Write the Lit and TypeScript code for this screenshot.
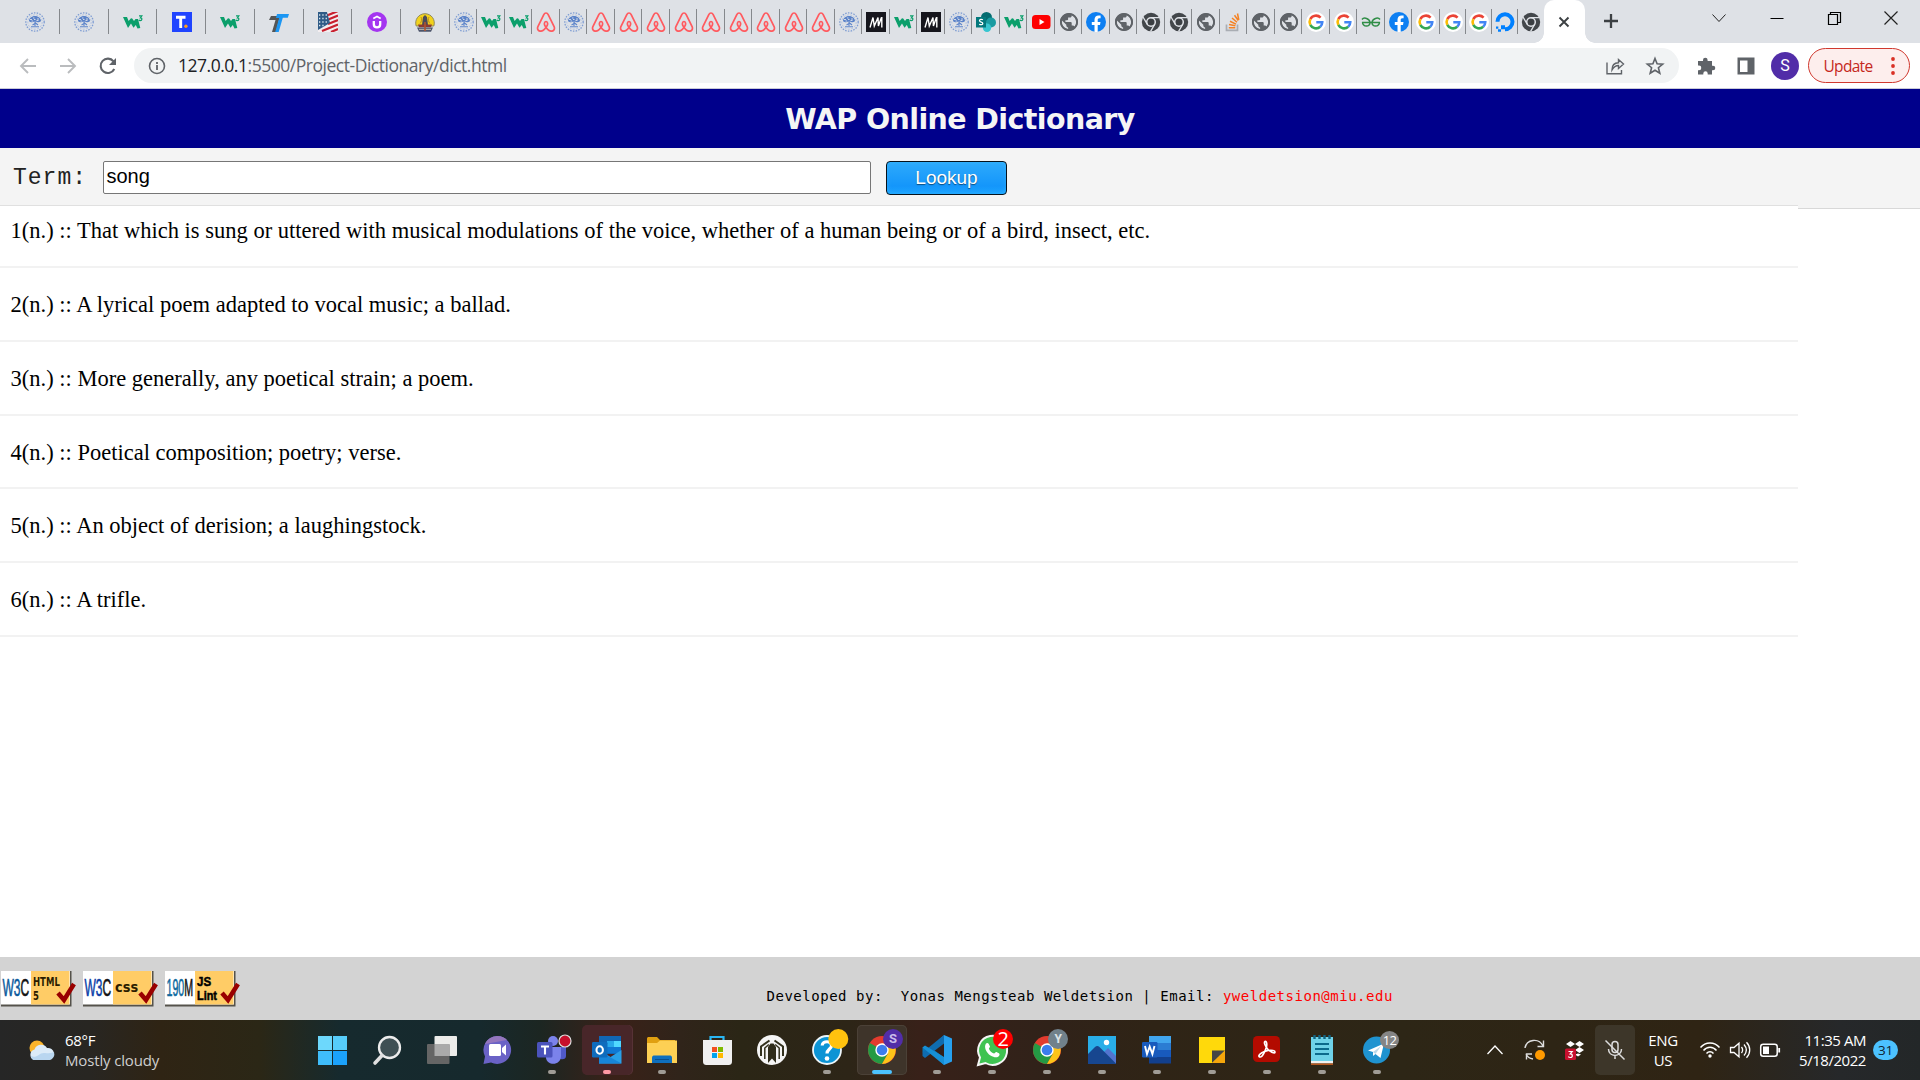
import { LitElement, html, svg, css } from "lit";
import { customElement } from "lit/decorators.js";

const glyph = (size: number, body: unknown, box = size) =>
  html`<svg width=${size} height=${size} viewBox="0 0 ${box} ${box}" fill="none">${body}</svg>`;

/* ---------- favicons, all on a 20 x 20 grid ---------- */
const googleG = svg`<circle cx="10" cy="10" r="10" fill="#fff"/>
  <path d="M14.6 5.6A6.4 6.4 0 0 0 4.3 7.1" stroke="#ea4335" stroke-width="2.6"/>
  <path d="M4.3 7.1a6.4 6.4 0 0 0 0 5.8" stroke="#fbbc05" stroke-width="2.6"/>
  <path d="M4.3 12.9a6.4 6.4 0 0 0 9.9 1.9" stroke="#34a853" stroke-width="2.6"/>
  <path d="M14.2 14.8a6.2 6.2 0 0 0 2.1-4.5h-6" stroke="#4285f4" stroke-width="2.5"/>`;

const favicons: Record<string, unknown> = {
  seal: svg`<circle cx="10" cy="10" r="9.200" stroke="#7f9dd3" stroke-width="1.300" stroke-dasharray="1.500 1.300"/>
    <circle cx="10" cy="10" r="7.200" stroke="#a9bce0" stroke-width=".8" stroke-dasharray="2 1.500"/>
    <path d="M4 9c0-2.500 2.500-5 6-5s6 2.500 6 5c-1 1.500-2 1-3 1.200s-2-.7-3-.700-2 .9-3 .700-2 .3-3-1.200z" fill="#5b83c9"/>
    <path d="M10 9v5M6 14.800h8M10 10.500l3 2.500M10 11.500 7.500 13" stroke="#5f86cb" stroke-width="1.100"/>
    <path d="M5 7.500h2M8 6h1.500M12 7h2M6.500 9H8M11.500 8.500h2M9 7.500h1.500" stroke="#dde1e9" stroke-width=".9"/>`,
  w3: svg`<path d="M0 5h4l1.600 4L8 6.200l1.200.3L11 9l1.500-2H15l2.300 9-2.800.5L12.800 13 10.500 15.800 8 11.500 5 16z" fill="#0b9f6b"/>
    <path d="M16 3.800h2.900l-1.500 2c2 0 2 2.800-.2 2.800-.8 0-1.200-.3-1.500-.7" stroke="#0b9f6b" stroke-width="1.200"/>`,
  tdot: svg`<path d="M0 0h20v20H0z" fill="#2044ff"/><path d="M4 5.200h9.500M8.700 5v11" stroke="#fff" stroke-width="2.900"/><circle cx="13.900" cy="14.300" r="1.700" fill="#ff9d1c"/>`,
  tt: svg`<path d="M2 4h9l-4 16H3L6.500 8H0z" fill="#555"/><path d="M8 2h12l-1.200 3.800h-5L9.700 20H6.200l4-14H7z" fill="#1b96f3"/>`,
  flag: svg`<path d="M0 0h20v20H0z" fill="#f4eef0"/>
    <path d="M9 3.500 20-1M9 8l11-4.500M10 12l10-4M4 19l16-6.500M13 20l7-3" stroke="#c8202f" stroke-width="2.200"/>
    <path d="M0 0h9l3 11-12 7z" fill="#2f5b87"/>
    <path d="M1 3h10M1 6.500h10M1 10h10M1 13.500h6" stroke="#dce8f0" stroke-width="1.300" stroke-dasharray="1.300 2"/>`,
  udemy: svg`<circle cx="10" cy="10" r="10" fill="#a435f0"/><path d="M6.800 9v3.200c0 4.300 6.400 4.300 6.400 0V9" stroke="#fff" stroke-width="2.300"/><path d="M6.300 6.600 10 4.400l3.700 2.200" stroke="#fff" stroke-width="1.700"/>`,
  emblem: svg`<path d="M1.200 14A9.300 9.300 0 1 1 18.800 14z" fill="#f2d21c" stroke="#8f8a5c" stroke-width="1"/>
    <path d="M7 13 8 5l2-2 2 2 1 8z" fill="#4b4a58"/><path d="M6 5c1.300 2 .5 5-1 6.500M14 5c-1.300 2-.5 5 1 6.500" stroke="#b9892b" stroke-width="1"/>
    <path d="M3 12.500h14l-1 2.700H4z" fill="#8b3a30"/><path d="M2 15.500h16l-2 4.300H4z" fill="#4d556b"/><path d="M4 17.300h12" stroke="#c9c2b4" stroke-width="1"/><path d="M10 10v9" stroke="#b0562f" stroke-width="1.600"/>`,
  airbnb: svg`<path d="M10 1c1 0 1.700.6 2.200 1.600l5.900 12c1 2.200-.3 4.600-2.600 4.600-2.600 0-5.500-3.200-6.600-5.500-1-2-.4-4.200 1.100-4.200s2.100 2.200 1.100 4.200c-1.100 2.300-4 5.500-6.600 5.500-2.300 0-3.600-2.400-2.600-4.600l5.900-12C8.300 1.600 9 1 10 1z" stroke="#ff5a5f" stroke-width="1.700"/>`,
  medium: svg`<path d="M0 0h20v20H0z" fill="#16161d"/><path d="M4 15.500 7 5.500l1.300 8.500 3.700-8.500.4 8.500 3-8.500M15.800 5v10.500" stroke="#fff" stroke-width="1.400"/>`,
  sharepoint: svg`<circle cx="10.500" cy="5.500" r="5.500" fill="#036c70"/><circle cx="15" cy="10.500" r="5" fill="#1a9ba1"/><circle cx="11" cy="15.800" r="4.200" fill="#37c6d0"/>
    <path d="M0 5h10v10.500H0z" fill="#03787c"/><path d="M6.900 7.800C5.500 7 3.500 7.300 3.500 8.600c0 1.900 3.300 1 3.300 2.800 0 1.500-2.200 1.600-3.600.8" stroke="#fff" stroke-width="1.300"/>`,
  youtube: svg`<rect x="1" y="3" width="18.500" height="14" rx="3.500" fill="#fe0000"/><path d="m8.500 7 5 3-5 3z" fill="#fff"/>`,
  globe: svg`<g transform="translate(-.8 -.8) scale(.9)"><path d="M12 2C6.480 2 2 6.480 2 12s4.480 10 10 10 10-4.480 10-10S17.520 2 12 2zm-1 17.930c-3.950-.490-7-3.850-7-7.930 0-.620.080-1.210.210-1.790L9 15v1c0 1.100.900 2 2 2v1.930zm6.900-2.540c-.260-.810-1-1.390-1.900-1.390h-1v-3c0-.550-.450-1-1-1H8v-2h2c.550 0 1-.450 1-1V7h2c1.100 0 2-.900 2-2v-.410c2.930 1.190 5 4.060 5 7.410 0 2.080-.800 3.970-2.100 5.390z" fill="#5f6368"/><circle cx="12" cy="12" r="9" stroke="#5f6368" stroke-width="2"/></g>`,
  facebook: svg`<circle cx="10" cy="10" r="10" fill="#0d7ff2"/><path d="M8.500 20v-7H5.800v-3h2.700V7.700c0-2.800 1.700-4.300 4.100-4.300l2 .2v2.600h-1.300c-1.300 0-1.600.8-1.600 1.600V10h2.800l-.5 3h-2.300v7z" fill="#fff"/>`,
  chrome: svg`<circle cx="10" cy="10" r="9.200" fill="#43474b"/><circle cx="10" cy="10" r="4.300" stroke="#dfe2e7" stroke-width="1.500"/><circle cx="10" cy="10" r="2.900" fill="#3b3f43"/>
    <path d="M10 5.600h8.500M6.200 12.200 2 5M13.800 12.200 9.600 19.400" stroke="#dfe2e7" stroke-width="1.300"/>`,
  overflow: svg`<path d="M2.500 12.500v5.800h11v-5.800" stroke="#a9adb3" stroke-width="1.700"/>
    <path d="M4.800 15.800h6.500M5 12.500l6.400 1.300M6 9.300l6 2.800M8 6l5 4.200M10.500 3.200 14.300 8.500M13.500 1.500l1.300 6.500" stroke="#f48225" stroke-width="1.500"/>`,
  google: googleG,
  gfg: svg`<path d="M1 7.500c2-2.800 7.500-1 8 2.800M1 10.500h18M9 10.500c0 5-7 4.500-7.500 0M19 7.500c-2-2.800-7.500-1-8 2.800M11 10.500c0 5 7 4.500 7.500 0" stroke="#2f8d46" stroke-width="1.500"/>`,
  ocean: svg`<path d="M10 17.300A7.500 7.500 0 1 0 2.500 9.700" stroke="#0080ff" stroke-width="4"/><path d="M6 13.300h4v4H6zM3 17.300h3v2.500H3zM1 14.500h2.300v2.300H1z" fill="#0080ff"/>`,
};

const wideTabs = ["seal", "seal", "w3", "tdot", "w3", "tt", "flag", "udemy", "emblem"];
const slimTabs = [
  "seal", "w3", "w3", "airbnb", "seal",
  ...Array<string>(9).fill("airbnb"),
  "seal", "medium", "w3", "medium", "seal", "sharepoint", "w3", "youtube", "globe", "facebook", "globe",
  "chrome", "chrome", "globe", "overflow", "globe", "globe", "google", "google", "gfg", "facebook", "google",
];
const lastTabs = ["google", "google", "ocean", "chrome"];

/* ---------- taskbar icons, all on a 32 x 32 grid ---------- */
const chromeColor = svg`<circle cx="16" cy="16" r="14" fill="#e33b2e"/>
  <path d="M16 16 3.900 9A14 14 0 0 0 16 30l6-10.400z" fill="#249a44"/>
  <path d="M16 16 22 19.500 16 30A14 14 0 0 0 28.100 9.500H16z" fill="#fdc419"/>
  <circle cx="16" cy="16" r="6.700" fill="#fff"/><circle cx="16" cy="16" r="5.300" fill="#3b7ded"/>`;

interface App { icon: unknown; run?: boolean; tone?: string; badge?: string; badgeTone?: string; }

const apps: App[] = [
  { icon: svg`<path d="M2 2h14v14H2z" fill="#6dd8fc"/><path d="M17 2h14v14H17z" fill="#56cdfb"/><path d="M2 17h14v14H2z" fill="#3fbdfb"/><path d="M17 17h14v14H17z" fill="#1ba2fb"/>` },
  { icon: svg`<circle cx="18.500" cy="13.500" r="10.500" fill="#3f5054" stroke="#ececec" stroke-width="2.300"/><path d="m11 21.500-7 7.500" stroke="#e0e0e0" stroke-width="3.600" stroke-linecap="round"/>` },
  { icon: svg`<rect x="8.500" y="2" width="22.500" height="20" rx="1" fill="#ececea"/><rect x="1" y="10" width="22.500" height="20" rx="1" fill="#656565"/><path d="M8.500 10h15v12h-15z" fill="#aaa"/>` },
  { icon: svg`<path d="M16 2a14 14 0 1 1-6 26.600L2.500 30 4 22.500A14 14 0 0 1 16 2z" fill="#6a62c6"/><path d="M4 10a14 14 0 0 1 12-8c5 0 8 2 10 4z" fill="#9476bd"/><rect x="8" y="10" width="12" height="12" rx="1.500" fill="#fff"/><path d="m21 14 4-3.500v11L21 18z" fill="#fff"/>` },
  { icon: svg`<circle cx="17" cy="7" r="5" fill="#7b83eb"/><path d="M22 13h8v9c0 4-5 4-7 2z" fill="#5059c9"/><path d="M10 13h15v9c0 10-14 10-15 2z" fill="#7b83eb"/><rect x="1" y="8" width="15.500" height="15.500" rx="1.500" fill="#4b53bc"/><path d="M5 12.500h8M9 12.500v8" stroke="#fff" stroke-width="2.100"/><circle cx="29" cy="7" r="6" fill="#c50f2b" stroke="#ddd" stroke-width="1.200"/>`, run: true },
  { icon: svg`<path d="M8 2h22v18H8z" fill="#1066b5"/><path d="M16 7h7v6h-7z" fill="#28a8ea"/><path d="M23 7h7v6h-7z" fill="#50d9ff"/><path d="M16 13h14v6H16z" fill="#0f78d4"/><path d="M8 16v13.500h22.500V16l-11 7z" fill="#28a0e8"/><path d="m8 17 22.500 12.500H8z" fill="#1785d8"/><rect x="1" y="8" width="15.500" height="15.500" rx="1.200" fill="#0f6cbd"/><ellipse cx="8.700" cy="16" rx="3.200" ry="3.800" stroke="#fff" stroke-width="2.100"/>`, run: true, tone: "alert" },
  { icon: svg`<path d="M1 5c0-1.500.5-2 2-2h8l3 3h15v6H1z" fill="#e0a011"/><path d="M1 9h10l3-2.500h17V29H1z" fill="#fdd054"/><path d="M6 29v-5c0-2 1-2.500 2.500-2.500h15c1.500 0 2.500.5 2.500 2.500v5z" fill="#0f6fbd"/><path d="M9 25.500h14" stroke="#0a4e8c"/>`, run: true },
  { icon: svg`<path d="M9.500 8V3h13v5" stroke="#29b6f2" stroke-width="2.200"/><path d="M2 6h29v21c0 3-1 4-4 4H6c-3 0-4-1-4-4z" fill="#f0f0f0"/><path d="M11 13h5v5h-5z" fill="#f25022"/><path d="M17 13h5v5h-5z" fill="#7fba00"/><path d="M11 19h5v5h-5z" fill="#00a4ef"/><path d="M17 19h5v5h-5z" fill="#ffb900"/>` },
  { icon: svg`<circle cx="16" cy="16" r="15" fill="#f5f5f5"/><path d="M5 22V12.500L13.500 6.500M27 22V12.500L18.500 6.500" stroke="#33311d" stroke-width="2"/><path d="M8.800 25V14l4-3.500M23.200 25V14l-4-3.500" stroke="#33311d" stroke-width="1.500"/><path d="M12 29V13l2.500-3.500h3L20 13v16l-4-4.500z" fill="#302d1b"/>` },
  { icon: svg`<circle cx="16" cy="16" r="14" fill="#0c94d5" stroke="#eef6fa" stroke-width="1.800"/><path d="M11.200 11.500c.3-5 9.500-5 9.300.2-.1 3.300-4.500 3.500-4.500 7.800" stroke="#fff" stroke-width="3.200"/><circle cx="16" cy="24.500" r="2.300" fill="#fff"/><circle cx="27.300" cy="5" r="10" fill="#ffc20e"/>`, run: true },
  { icon: chromeColor, run: true, tone: "current", badge: "S", badgeTone: "violet" },
  { icon: svg`<path d="M23 1v30L7.500 17 4 20l-2.500-1.500V13.500L4 12l4 3z" fill="#0877b9"/><path d="M13 16 23 8.500v15z" fill="#331f19"/><path d="M23 1v8.500L4 24l-2.500-2V18.500z" fill="#0f6cb0"/><path d="m1.500 13.500 2.500-2L23 23v8z" fill="#168fd6"/><path d="m23 1 8 3.500v23L23 31z" fill="#26a0ee"/>`, run: true },
  { icon: svg`<path d="M2 31 4 23.500A14.500 14.500 0 1 1 9.500 29z" fill="#3fc351" stroke="#f6f6f6" stroke-width="2"/><path d="M10 9.500c2-1.500 3 .5 4 3 0 1-1.500 1.700-1 2.500 1 2 2.500 3.500 5 4.500 1 0 1.500-2 2.500-1.500 2 1 3.500 1.500 3 3-1 3-5 3-9 .5S7.500 13 10 9.500z" fill="#fff"/>`, run: true, badge: "2", badgeTone: "red" },
  { icon: chromeColor, run: true, badge: "Y", badgeTone: "slate" },
  { icon: svg`<path d="M2 2h28v28H2z" fill="#29aee8"/><path d="m14 22 8-8 8 8v8H14z" fill="#5274cf"/><path d="M2 20 9 13c1.500-1.500 3-1.500 4.500 0L30 29.500V30H2z" fill="#17468f"/><circle cx="20.500" cy="8.500" r="2.700" fill="#fff"/>`, run: true },
  { icon: svg`<path d="M8 2h22v7H8z" fill="#41a5ee"/><path d="M8 9h22v7H8z" fill="#2b7cd3"/><path d="M8 16h22v7H8z" fill="#185abd"/><path d="M8 23h22v6.500H8z" fill="#123f8c"/><rect x="1" y="8" width="15.500" height="15.500" rx="1.200" fill="#185abd"/><path d="m4 12 2 8 2.700-7.500L11.400 20l2.100-8" stroke="#fff" stroke-width="1.900"/>`, run: true },
  { icon: svg`<path d="M3 3h26v26H3z" fill="#ffd90b"/><path d="M16 29V16.500h13z" fill="#454545"/><path d="M29 16.500V29H16z" fill="#f5a60b"/>`, run: true },
  { icon: svg`<rect x="2" y="2" width="27" height="26" rx="4.500" fill="#b30b00"/><path d="M8 21.500c1.500-3 5-4 9-5 4-.5 7 0 7 1.500 0 2-4.500 0-7-2.500-2.500-3-4.500-7-3-8s2.300 2.500 1.300 6-4 9.500-6 9.500c-1 0-1.500-.5-1.300-1.500z" stroke="#fff" stroke-width="1.700"/>`, run: true },
  { icon: svg`<path d="M5 3h22v26H5z" fill="#6fd2e8"/><path d="M5 27h22v2.500H5z" fill="#f0f0ee"/><path d="M5 29.500h22V31H5z" fill="#b4561c"/><path d="M8.500 1v4M13.500 1v4M18.500 1v4M23.500 1v4" stroke="#116381" stroke-width="2.400"/><path d="M9 10h14M9 15h14M9 20h14" stroke="#0c6a8c" stroke-width="2"/>`, run: true },
  { icon: svg`<circle cx="15.500" cy="16" r="13.500" fill="#1f93d0"/><path d="m7 16.500 16-7-3.500 14.500-5-4-2.500 2v-4z" fill="#fff"/><path d="m12 18 8-6-5.500 8z" fill="#bcd9ea"/>`, run: true, badge: "12", badgeTone: "gray" },
];

const definitions = [
  "1(n.) :: That which is sung or uttered with musical modulations of the voice, whether of a human being or of a bird, insect, etc.",
  "2(n.) :: A lyrical poem adapted to vocal music; a ballad.",
  "3(n.) :: More generally, any poetical strain; a poem.",
  "4(n.) :: Poetical composition; poetry; verse.",
  "5(n.) :: An object of derision; a laughingstock.",
  "6(n.) :: A trifle.",
];

@customElement("browser-chrome")
class BrowserChrome extends LitElement {
  static styles = css`
    :host { display: block; font-family: "Open Sans", "Noto Sans", sans-serif; }
    svg { display: block; flex: none; }
    .strip { display: flex; height: 43px; background: #dee1e6; padding-left: 11px; box-sizing: border-box; }
    .tab { display: flex; align-items: center; justify-content: center; box-sizing: border-box; height: 43px; flex: none; background: linear-gradient(#85888c, #85888c) right center / 1px 25px no-repeat; }
    .wide { width: 48.750px; }
    .slim { width: 27.500px; }
    .last { width: 26px; }
    .last.end { background: none; }
    .open { width: 41px; height: 43px; flex: none; background: #fff; border-radius: 10px 10px 0 0; display: flex; align-items: center; justify-content: center; position: relative; }
    .open::before, .open::after { content: ""; position: absolute; bottom: 0; width: 10px; height: 10px; }
    .open::before { left: -10px; background: radial-gradient(circle at 0 0, transparent 9.500px, #fff 10px); }
    .open::after { right: -10px; background: radial-gradient(circle at 100% 0, transparent 9.500px, #fff 10px); }
    .plus { margin: 11px 0 0 16px; }
    .wins { display: flex; margin-left: auto; padding: 8px .4px 0 0; }
    .wins span { width: 57.200px; display: flex; justify-content: center; }
    .bar { display: flex; align-items: center; height: 45px; background: #fff; box-sizing: border-box; padding: 0 10px 0 17.500px; }
    .bar > svg { margin-right: 20.300px; }
    .omni { flex: 1; display: flex; align-items: center; height: 35px; border-radius: 18px; background: #f1f3f4; padding: 0 14px 0 12.500px; margin-left: -4px; }
    .url { margin-left: 11px; font-size: 17.500px; line-height: 35px; letter-spacing: -.47px; color: #5f6368; flex: 1; white-space: pre; }
    .url b { font-weight: 400; color: #202124; }
    .omni svg:nth-of-type(2) { margin-right: 20px; }
    .ext { display: flex; align-items: center; padding-left: 17px; gap: 20px; }
    .me { width: 28px; height: 28px; border-radius: 50%; background: #512da8; color: #fff; font: 16px/28px "Roboto", sans-serif; text-align: center; margin-left: -4.500px; }
    .update { display: flex; align-items: center; justify-content: space-between; box-sizing: border-box; width: 102px; height: 35px; border: 1.500px solid #d0382e; border-radius: 18px; background: #fdeeed; color: #c5281c; font: 400 15.500px/32px "Open Sans", sans-serif; letter-spacing: -.7px; padding: 0 14px 0 14.500px; margin-left: -11px; }
  `;
  render() {
    return html`
      <div class="strip">
        ${wideTabs.map((t) => html`<div class="tab wide">${glyph(20, favicons[t])}</div>`)}
        ${slimTabs.map((t) => html`<div class="tab slim">${glyph(20, favicons[t])}</div>`)}
        ${lastTabs.map((t) => html`<div class="tab last ${t === "chrome" ? "end" : ""}">${glyph(20, favicons[t])}</div>`)}
        <div class="open">${glyph(12, svg`<path d="m1.500 1.500 9 9M10.500 1.500l-9 9" stroke="#3c4043" stroke-width="1.900"/>`)}</div>
        <div class="plus">${glyph(20, svg`<path d="M10 3v14M3 10h14" stroke="#3c4043" stroke-width="2.300"/>`)}</div>
        <div class="wins">
          <span>${glyph(20, svg`<path d="m3.500 6.500 6.500 7 6.500-7" stroke="#222"/>`)}</span>
          <span>${glyph(20, svg`<path d="M3.500 10.500h13" stroke="#000"/>`)}</span>
          <span>${glyph(20, svg`<path d="M4.500 6.500h9v10h-9zM6.500 6.500v-2h10v10h-3" stroke="#000" stroke-width="1.200"/>`)}</span>
          <span>${glyph(20, svg`<path d="m3.500 3.500 13 13M16.500 3.500l-13 13" stroke="#222" stroke-width="1.200"/>`)}</span>
        </div>
      </div>
      <div class="bar">
        ${glyph(20, svg`<path d="M18 10H3.500M10 3l-7 7 7 7" stroke="#babcbe" stroke-width="1.900"/>`)}
        ${glyph(20, svg`<path d="M2 10h14.500M10 3l7 7-7 7" stroke="#babcbe" stroke-width="1.900"/>`)}
        ${glyph(20, svg`<path d="M16.300 13A7.200 7.200 0 1 1 15.500 5.300" stroke="#5f6368" stroke-width="2.100"/><path d="M18 2v7h-7z" fill="#5f6368"/>`)}
        <div class="omni">
          ${glyph(20, svg`<circle cx="10" cy="10" r="7.500" stroke="#5f6368" stroke-width="1.600"/><path d="M10 9v5M10 6v1.900" stroke="#5f6368" stroke-width="1.800"/>`)}
          <div class="url"><b>127.0.0.1</b>:5500/Project-Dictionary/dict.html</div>
          ${glyph(20, svg`<path d="M2 6.500v11.300h14.500V14M7 14c0-5 2.500-7.200 6.500-7.200V3.500L18.500 8l-5 4.500V9.500C11 9.500 9 10.500 7 14z" stroke="#5f6368" stroke-width="1.400"/>`)}
          ${glyph(20, svg`<path d="m10 2.500 2.100 5.200 5.600.4-4.300 3.600 1.400 5.500-4.800-3-4.800 3 1.400-5.500-4.300-3.600 5.600-.4z" stroke="#5f6368" stroke-width="1.600"/>`)}
        </div>
        <div class="ext">
          ${glyph(20, svg`<path d="M2 5h5V4a2.300 2.300 0 0 1 4.600 0v1H16v4.700h1a2.300 2.300 0 0 1 0 4.600h-1V18.500h-4.300v-1a2.200 2.200 0 0 0-4.400 0v1H2v-4.300h1a2.300 2.300 0 0 0 0-4.600H2z" fill="#5f6368"/>`)}
          ${glyph(20, svg`<path d="M1.500 1.500h17v17h-17z" fill="#5f6368"/><path d="M4 4.500h7.500v11.500H4z" fill="#fff"/>`)}
          <div class="me">S</div>
          <div class="update">Update <svg width="4" height="20" viewBox="0 0 4 20"><circle cx="2" cy="3" r="1.900" fill="#d93025"/><circle cx="2" cy="10" r="1.900" fill="#d93025"/><circle cx="2" cy="17" r="1.900" fill="#d93025"/></svg></div>
        </div>
      </div>`;
  }
}

@customElement("dictionary-page")
class DictionaryPage extends LitElement {
  static styles = css`
    :host { display: flex; flex-direction: column; height: 932px; background: #fff; border-top: 1px solid #c9cad8; box-sizing: border-box; }
    .title { flex: none; height: 59px; box-sizing: border-box; padding-top: 2px; background: #00008b; color: #f5f5f5; font: bold 28.500px/58px "DejaVu Sans", sans-serif; letter-spacing: -.6px; text-align: center; }
    .form { flex: none; height: 61px; box-sizing: border-box; display: flex; align-items: flex-start; background: #f4f4f4; border-bottom: 1px solid #d8d8d8; padding: 13px 0 0 13px; }
    .label { width: 90px; box-sizing: border-box; padding-top: 1px; font: 23px/32px "Liberation Mono", monospace; letter-spacing: 1px; color: #222; }
    .field { width: 768px; height: 33px; box-sizing: border-box; border: 1px solid #767676; border-radius: 2px; background: #fff; padding-left: 2.500px; font: 20px/28px "Liberation Sans", Arial, sans-serif; color: #000; }
    .go { width: 121px; height: 34px; box-sizing: border-box; margin-left: 15px; border: 1px solid #06121c; border-radius: 4px; background: linear-gradient(#2eaafb, #1496fb 75%, #1ca4ff); box-shadow: inset 0 0 5px rgba(60, 190, 255, .5); color: #fff; font: 19px/32px "Liberation Sans", Arial, sans-serif; text-align: center; text-shadow: 0 1px 1px rgba(0, 0, 0, .5); padding: 0; }
    .list { flex: 1; width: 1798px; margin-top: -4px; background: #fff; border-top: 1px solid #e0e0e0; }
    .row { display: flex; align-items: flex-end; height: 73.750px; box-sizing: border-box; border-bottom: 2px solid #f2f2f2; padding: 0 0 19.700px 10.500px; font: 22.500px/30px "Liberation Serif", "Times New Roman", serif; letter-spacing: .008px; color: #000; white-space: pre; }
    .row:first-child { height: 62px; }
    .foot { flex: none; height: 63px; background: #d3d3d3; display: grid; grid-template-columns: 766.500px 1fr; }
    .badges { display: flex; gap: 7px; padding: 13px 0 0 1px; }
    .dev { font: 14px/20px "DejaVu Sans Mono", monospace; letter-spacing: .520px; white-space: pre; color: #000; padding-top: 29px; }
    .mail { color: #f00; }
    svg { display: block; }
    .org { font: 24px "Liberation Sans", Arial, sans-serif; stroke-width: .6px; }
    .std { font: bold 12px "DejaVu Sans", sans-serif; fill: #2b1c00; }
    .sheet { font-size: 14px; }
    .lint { font: bold 12.500px "Liberation Sans", Arial, sans-serif; fill: #000; stroke: #000; stroke-width: .5px; }
  `;
  badge(left: unknown, right: unknown) {
    return html`<svg width="75" height="37" viewBox="0 0 75 37">
      <path d="M0 1h70.500v35.500H0z" fill="#55524b"/><path d="M0 1h69v33.500H0z" fill="#fff"/><path d="M30 1h38.500v33.500H30z" fill="#ffcc66"/>
      ${left}${right}<path d="m57 23 6 7L73 14" stroke="#990000" stroke-width="4.500" fill="none"/></svg>`;
  }
  org(blue: string, dark: string, tint: string, squeeze: number) {
    return svg`<text class="org" transform="translate(1.500 26) scale(${squeeze} 1)"><tspan fill=${tint} stroke=${tint}>${blue}</tspan><tspan fill="#111" stroke="#111">${dark}</tspan></text>`;
  }
  render() {
    return html`
      <div class="title">WAP Online Dictionary</div>
      <div class="form"><div class="label">Term:</div><div class="field">song</div><button class="go">Lookup</button></div>
      <div class="list">${definitions.map((d) => html`<div class="row">${d}</div>`)}</div>
      <div class="foot">
        <div class="badges">
          ${this.badge(this.org("W3", "C", "#0a5a9c", 0.5), svg`<text class="std" transform="translate(32 15.500) scale(.710 1)">HTML</text><text class="std" transform="translate(32 30) scale(.710 1)">5</text>`)}
          ${this.badge(this.org("W3", "C", "#0b3fa8", 0.5), svg`<text class="std sheet" transform="translate(32 22) scale(.930 1)">css</text>`)}
          ${this.badge(this.org("190", "M", "#0f6aa0", 0.445), svg`<text class="lint" transform="translate(32 15.500) scale(.920 1.080)">JS</text><text class="lint" transform="translate(32 30) scale(.870 1)">Lint</text>`)}
        </div>
        <div class="dev">Developed by:  Yonas Mengsteab Weldetsion | Email: <span class="mail">yweldetsion@miu.edu</span></div>
      </div>`;
  }
}

@customElement("task-bar")
class TaskBar extends LitElement {
  static styles = css`
    :host { display: flex; height: 60px; font-family: "Open Sans", "Noto Sans", sans-serif; color: #fff; background: linear-gradient(90deg, #262626 0, #282622 90px, #2f2414 160px, #2b2716 260px, #162a2e 340px, #16292d 480px, #1c2622 540px, #3a2118 615px, #30241a 680px, #2b2616 740px, #2d2517 850px, #382119 920px, #302219 1050px, #2f2416 1150px, #2d2616 1400px, #2f2414 1700px, #26282a 1840px, #232728 1920px); }
    svg { display: block; flex: none; overflow: visible; }
    .weather { width: 304px; flex: none; box-sizing: border-box; display: flex; padding-left: 28px; gap: 10px; }
    .weather svg { margin-top: 18px; }
    .wx { font-size: 15px; line-height: 20px; padding-top: 10px; letter-spacing: -.3px; color: #fff; white-space: nowrap; }
    .wx span { color: #cfcfcf; letter-spacing: -.15px; }
    .apps { display: flex; }
    .app { width: 50px; height: 50px; margin: 5px 2.520px 0; border-radius: 5px; position: relative; display: flex; align-items: center; justify-content: center; }
    .alert { background: #482629; box-shadow: 1px 0 0 #573236; }
    .current { background: #3e342a; box-shadow: inset 0 0 0 1px #4b4137; }
    .dot { position: absolute; bottom: 1px; left: 21px; width: 8px; height: 4px; border-radius: 2px; background: #a09c96; }
    .alert .dot { background: #ff99a4; }
    .current .dot { left: 15px; width: 20px; background: #4cc2ff; }
    .count { position: absolute; left: 26px; top: 4px; width: 20px; height: 20px; border-radius: 50%; font: 20px/20px "Open Sans", sans-serif; text-align: center; letter-spacing: -.5px; }
    .violet { background: #512da8; color: #c9bbec; font: bold 13px/20px "Roboto", sans-serif; }
    .slate { background: #71818b; color: #dde4e8; font: bold 12px/20px "Roboto", sans-serif; }
    .red { background: #f00; }
    .gray { background: #858585; font-size: 13px; top: 6px; left: 28px; width: 19px; height: 18px; line-height: 18px; }
    .tray { margin-left: auto; display: flex; align-items: center; padding-right: 22px; white-space: nowrap; }
    .cell { width: 40px; height: 50px; display: flex; align-items: center; justify-content: center; border-radius: 5px; }
    .lit { background: #3d3629; }
    .lang { width: 56px; text-align: center; font-size: 15px; line-height: 20px; letter-spacing: -.4px; margin-right: 4px; }
    .stat { width: 30px; display: flex; justify-content: center; }
    .clock { width: 81px; text-align: right; font-size: 15px; line-height: 20px; letter-spacing: -.45px; margin-top: -1px; }
    .bell { width: 25px; height: 20px; margin-left: 7px; border-radius: 10px; background: #4cc2ff; color: #10242f; font-size: 13.500px; line-height: 20px; text-align: center; letter-spacing: -.3px; }
  `;
  render() {
    return html`
      <div class="weather">
        <svg width="27" height="24" viewBox="0 0 27 24"><circle cx="9" cy="10" r="7.500" fill="#fbb42a"/><path d="M6 22a5.500 5.500 0 0 1 .5-10.500 7 7 0 0 1 12.500-1.500 6 6 0 0 1 2 12z" fill="#dcebf8"/><path d="M3 18c6 3 8-4 14-3 5 .5 7 0 9-1a6 6 0 0 1-5 8H6c-1.500 0-3-2-3-4z" fill="#b9d6f0"/></svg>
        <div class="wx">68°F<br /><span>Mostly cloudy</span></div>
      </div>
      <div class="apps">
        ${apps.map((a) => html`<div class="app ${a.tone ?? ""}">${glyph(32, a.icon)}
          ${a.badge ? html`<span class="count ${a.badgeTone}">${a.badge}</span>` : ""}
          ${a.run ? html`<span class="dot"></span>` : ""}</div>`)}
      </div>
      <div class="tray">
        <div class="cell">${glyph(20, svg`<path d="m2.500 14 7.500-8 7.500 8" stroke="#fff" stroke-width="1.300"/>`)}</div>
        <div class="cell">${glyph(24, svg`<path d="M2 10c1.500-9 14-10.500 18-2M20.500 2.500V8.500h-6M3.500 21.500V16H9M3 16c1.500 3 3.500 4.500 7 5" stroke="#ddd" stroke-width="1.400"/><circle cx="17" cy="17" r="5" fill="#ff9a00"/>`)}</div>
        <div class="cell">${glyph(20, svg`<path d="m1 4 4.500-3L10 4 5.500 7zM10 4l4.500-3L19 4l-4.500 3zM10 10l4.500-3 4.500 3-4.500 3zM10 14.500l3-1 3 1-3 2z" fill="#fff"/><rect x="0" y="8.500" width="11" height="11.500" rx="1.500" fill="#c8102e"/><path d="M3.500 11.500h3.700l-2 2.400c2.800 0 2.800 3.600 0 3.600-1 0-1.500-.3-2-.8" stroke="#fff" stroke-width="1.200"/>`)}</div>
        <div class="cell lit">${glyph(22, svg`<rect x="8" y="2.500" width="6" height="11" rx="3" stroke="#ddd" stroke-width="1.500"/><path d="M4.500 10c0 8.500 13 8.500 13 0M11 16.500V20M1.500 1.500l19 19" stroke="#ddd" stroke-width="1.500"/>`)}</div>
        <div class="lang">ENG<br />US</div>
        <div class="stat">${glyph(22, svg`<path d="M1.500 8.500c5-6 14-6 19 0M4.500 11.500c3.500-4.300 9.500-4.300 13 0M7.500 14.500c2-2.300 5-2.300 7 0" stroke="#fff" stroke-width="1.500"/><circle cx="11" cy="17" r="1.700" fill="#fff"/>`)}</div>
        <div class="stat">${glyph(22, svg`<path d="M1.500 8.500v5h3.500l5 4.300V4.200L5 8.500z" stroke="#fff" stroke-width="1.300"/><path d="M12.500 8c1.500 2 1.500 4 0 6M15 5.500c3 3.500 3 7.500 0 11M17.500 3.200c4.300 4.500 4.300 11 0 15.600" stroke="#fff" stroke-width="1.300"/>`)}</div>
        <div class="stat">${glyph(22, svg`<rect x="1.700" y="5.200" width="16.500" height="12" rx="2.500" stroke="#fff" stroke-width="1.500"/><path d="M4 7.500h6v7.500H4z" fill="#fff"/><path d="M20.200 9v4.500" stroke="#fff" stroke-width="1.800"/>`)}</div>
        <div class="clock">11:35 AM<br />5/18/2022</div>
        <div class="bell">31</div>
      </div>`;
  }
}

@customElement("app-root")
class AppRoot extends LitElement {
  static styles = css`
    :host { display: block; width: 1920px; height: 1080px; overflow: hidden; background: #fff; }
  `;
  render() {
    return html`<browser-chrome></browser-chrome><dictionary-page></dictionary-page><task-bar></task-bar>`;
  }
}
